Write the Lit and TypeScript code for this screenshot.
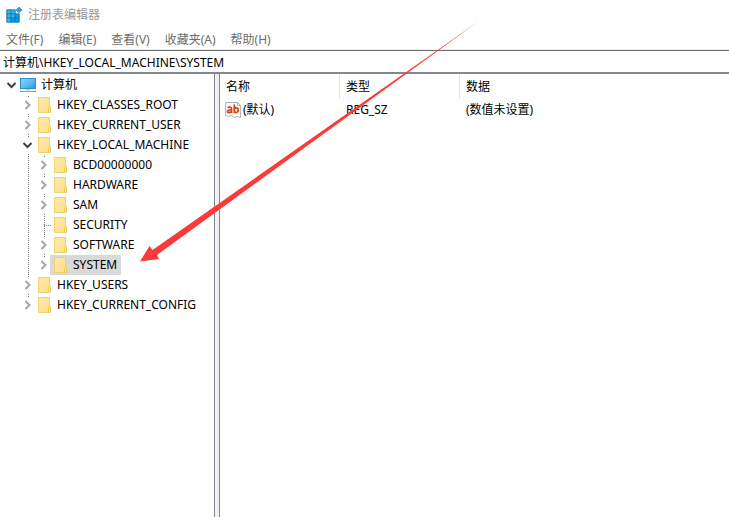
import { LitElement, html, svg, css, nothing } from "lit";
import { customElement, property, state } from "lit/decorators.js";
import { classMap } from "lit/directives/class-map.js";

interface KeyNode {
  name: string;
  icon?: "computer" | "folder";
  open?: boolean;
  leaf?: boolean;
  children?: KeyNode[];
}

const registry: KeyNode = {
  name: "计算机",
  icon: "computer",
  open: true,
  children: [
    { name: "HKEY_CLASSES_ROOT" },
    { name: "HKEY_CURRENT_USER" },
    {
      name: "HKEY_LOCAL_MACHINE",
      open: true,
      children: [
        { name: "BCD00000000" },
        { name: "HARDWARE" },
        { name: "SAM" },
        { name: "SECURITY", leaf: true },
        { name: "SOFTWARE" },
        { name: "SYSTEM" },
      ],
    },
    { name: "HKEY_USERS" },
    { name: "HKEY_CURRENT_CONFIG" },
  ],
};

const computerIcon = html`<svg class="icon" viewBox="0 0 16 16" aria-hidden="true">
  <defs>
    <linearGradient id="screen" x1="0" y1="0" x2="1" y2="1">
      <stop offset="0" stop-color="#8fd3f8" />
      <stop offset="0.5" stop-color="#62bdf2" />
      <stop offset="1" stop-color="#1f97e4" />
    </linearGradient>
  </defs>
  <rect x="0.5" y="1.5" width="15" height="10" fill="url(#screen)" stroke="#2f8fcc" />
  <path d="M6 12h4v2H6z" fill="#c5d6e0" />
  <path d="M0 14.5h16" stroke="#5f93b4" />
  <path d="M3 14.5h10" stroke="#7fb0cc" />
</svg>`;

const folderIcon = html`<svg class="icon" viewBox="0 0 16 16" aria-hidden="true">
  <defs>
    <linearGradient id="paper" x1="0" y1="0" x2="1" y2="1">
      <stop offset="0" stop-color="#ffeaa8" />
      <stop offset="1" stop-color="#fddf88" />
    </linearGradient>
  </defs>
  <path d="M2.5 0.5h11v15h-11z" fill="url(#paper)" stroke="#f0d070" />
  <path d="M12.500 15.500v-5l1-1h1v6z" fill="#ffe9a0" stroke="#ecc85a" stroke-width="0.900" />
</svg>`;

const chevronRight = html`<svg class="chevron" viewBox="0 0 12 12" aria-hidden="true">
  <path d="M3.500 2l4 4-4 4" fill="none" stroke="#a6a6a6" stroke-width="2" />
</svg>`;

const chevronDown = html`<svg class="chevron" viewBox="0 0 12 12" aria-hidden="true">
  <path d="M1.500 4l4 4 4-4" fill="none" stroke="#404040" stroke-width="2" />
</svg>`;

@customElement("key-tree")
export class KeyTree extends LitElement {
  @property({ attribute: false }) root: KeyNode = registry;
  @state() private selected = "SYSTEM";

  static styles = css`
    :host {
      display: block;
    }
    .list {
      list-style: none;
      margin: 0;
      padding: 0;
    }
    .row {
      display: flex;
      height: 20px;
      padding-left: 4px;
    }
    .cell {
      display: flex;
      flex: none;
      flex-direction: column;
      align-items: center;
      justify-content: center;
      width: 16px;
    }
    .dots {
      background: repeating-linear-gradient(#fff 0 1px, #808080 1px 2px) 8px 0 / 1px 100% no-repeat;
    }
    .dots.end {
      background-size: 1px 4px;
    }
    .leaf {
      width: 8px;
      height: 1px;
      align-self: flex-end;
      background: repeating-linear-gradient(90deg, #808080 0 1px, #fff 1px 2px);
    }
    .toggle,
    .key {
      border: 0;
      background: none;
      font: inherit;
      color: inherit;
    }
    .toggle {
      display: flex;
      padding: 2px;
      background: #fff;
    }
    .chevron {
      width: 12px;
      height: 12px;
    }
    .key {
      display: flex;
      align-items: center;
      gap: 5px;
      margin-left: -2px;
      padding: 0 4px 0 2px;
      white-space: nowrap;
    }
    .key.selected {
      background: #d9d9d9;
    }
    .icon {
      flex: none;
      width: 16px;
      height: 16px;
    }
  `;

  private renderNode(node: KeyNode, depth: number, last: boolean): unknown {
    const guides = Array.from({ length: depth });
    return html`<li role="treeitem" aria-expanded=${node.open ? "true" : "false"}>
      <div class="row">
        ${guides.map((_, i) => html`<span class=${classMap({ cell: true, dots: i > 0 })}></span>`)}
        <span class=${classMap({ cell: true, dots: depth > 0, end: last })}>
          ${node.leaf
            ? html`<span class="leaf"></span>`
            : html`<button class="toggle" aria-label=${node.name} @click=${() => this.toggle(node)}>
                ${node.open ? chevronDown : chevronRight}
              </button>`}
        </span>
        <button
          class=${classMap({ key: true, selected: node.name === this.selected })}
          @click=${() => (this.selected = node.name)}
        >
          ${node.icon === "computer" ? computerIcon : folderIcon}<span>${node.name}</span>
        </button>
      </div>
      ${node.open && node.children
        ? html`<ul class="list" role="group">
            ${node.children.map((c, i, all) => this.renderNode(c, depth + 1, i === all.length - 1))}
          </ul>`
        : nothing}
    </li>`;
  }

  private toggle(node: KeyNode) {
    node.open = !node.open;
    this.requestUpdate();
  }

  render() {
    return html`<ul class="list" role="tree">${this.renderNode(this.root, 0, true)}</ul>`;
  }
}

@customElement("app-root")
export class AppRoot extends LitElement {
  static styles = css`
    :host {
      display: flex;
      flex-direction: column;
      position: relative;
      min-height: 100vh;
      background: #fff;
      color: #000;
      font: 12px/16px "Noto Sans", "Noto Sans CJK SC", sans-serif;
    }
    .title {
      display: flex;
      align-items: center;
      gap: 6px;
      height: 30px;
      padding-left: 6px;
      color: #999;
    }
    .logo {
      width: 16px;
      height: 16px;
    }
    .menu {
      display: flex;
      gap: 15px;
      height: 19px;
      padding-left: 6px;
      color: #6d6d6d;
      border-bottom: 1px solid #f0f0f0;
    }
    .item {
      padding: 0;
      border: 0;
      background: none;
      font: inherit;
      color: inherit;
      white-space: nowrap;
    }
    .address {
      display: flex;
      border-top: 1px solid #696969;
      border-bottom: 2px solid #828790;
    }
    .path {
      flex: 1;
      height: 21px;
      box-sizing: border-box;
      padding: 0 3px;
      border: 0;
      outline: 0;
      background: #fff;
      font: inherit;
      color: inherit;
    }
    .panes {
      display: flex;
      flex: 1;
    }
    .tree {
      flex: none;
      width: 214px;
      padding-top: 1px;
    }
    .splitter {
      flex: none;
      width: 4px;
      background: #f0f0f0;
      border: solid #828790;
      border-width: 0 1px;
    }
    .values {
      flex: 1;
    }
    .table {
      width: 100%;
      border-spacing: 0;
      table-layout: fixed;
    }
    .table th,
    .table td {
      box-sizing: border-box;
      padding: 0 6px;
      text-align: left;
      font-weight: 400;
      white-space: nowrap;
    }
    .table th {
      height: 25px;
      border-right: 1px solid #e5e5e5;
    }
    .table th:last-child {
      border-right: 0;
    }
    .table td {
      height: 21px;
    }
    .table .narrow {
      width: 120px;
    }
    .table .named {
      padding-left: 5px;
    }
    .value {
      display: flex;
      align-items: center;
      gap: 2px;
    }
    .arrow {
      position: absolute;
      left: 140px;
      top: 20px;
      width: 340px;
      height: 244px;
      pointer-events: none;
    }
  `;

  private logo() {
    const tiles = [
      [1, 3], [5, 3], [1, 7], [5, 7], [9, 7], [1, 11], [5, 11], [9, 11],
    ];
    return html`<svg class="logo" viewBox="0 0 16 16" aria-hidden="true">
      <path d="M0.500 2.500h9v4h4v9H.5z" fill="#0a72ae" />
      ${tiles.map(
        ([x, y], i) =>
          svg`<rect x=${x} y=${y} width="4" height="4" fill=${i < 6 && i !== 4 ? "#35b6ee" : "#08a0e4"} stroke="#0a72ae" stroke-width="0.600" />`,
      )}
      <path d="M13 0l3 3-3 3-3-3z" fill="#2fa4de" stroke="#1a86c2" stroke-width="0.600" />
    </svg>`;
  }

  private stringIcon() {
    return html`<svg class="logo" viewBox="0 0 16 16" aria-hidden="true">
      <path d="M0.500 0.500h12l3 3v12l-3-1-3 1-3-2-3 1-3-1z" fill="#fafafa" stroke="#b4b4b4" />
      <path d="M12.500 0.500v3h3" fill="none" stroke="#b4b4b4" />
      <g fill="none" stroke="#d6431f" stroke-width="1.800">
        <path d="M2.500 5.500c3-1 4 0 4 1.500v4M6.500 8c-3-.2-4 .4-4 1.600 0 1.500 3 1.500 4-.5" />
        <path d="M9.300 2.500v8.500M9.300 7c1-2 4-1.500 4 1.200 0 2.700-3 3-4 1.200" />
      </g>
    </svg>`;
  }

  render() {
    const menus = ["文件(F)", "编辑(E)", "查看(V)", "收藏夹(A)", "帮助(H)"];
    return html`
      <header class="title">${this.logo()}<span>注册表编辑器</span></header>
      <nav class="menu">${menus.map((m) => html`<button class="item">${m}</button>`)}</nav>
      <div class="address">
        <input class="path" aria-label="地址" .value=${"计算机\\HKEY_LOCAL_MACHINE\\SYSTEM"} />
      </div>
      <main class="panes">
        <key-tree class="tree"></key-tree>
        <div class="splitter"></div>
        <section class="values">
          <table class="table">
            <thead>
              <tr><th class="narrow">名称</th><th class="narrow">类型</th><th>数据</th></tr>
            </thead>
            <tbody>
              <tr>
                <td class="named"><span class="value">${this.stringIcon()}<span>(默认)</span></span></td>
                <td>REG_SZ</td>
                <td>(数值未设置)</td>
              </tr>
            </tbody>
          </table>
        </section>
      </main>
      <svg class="arrow" viewBox="0 0 340 244" aria-hidden="true">
        <path d="M0 241.500L9.500 226l3 4L339 1 17 235l2 4z" fill="#fb3b3a" />
      </svg>
    `;
  }
}
